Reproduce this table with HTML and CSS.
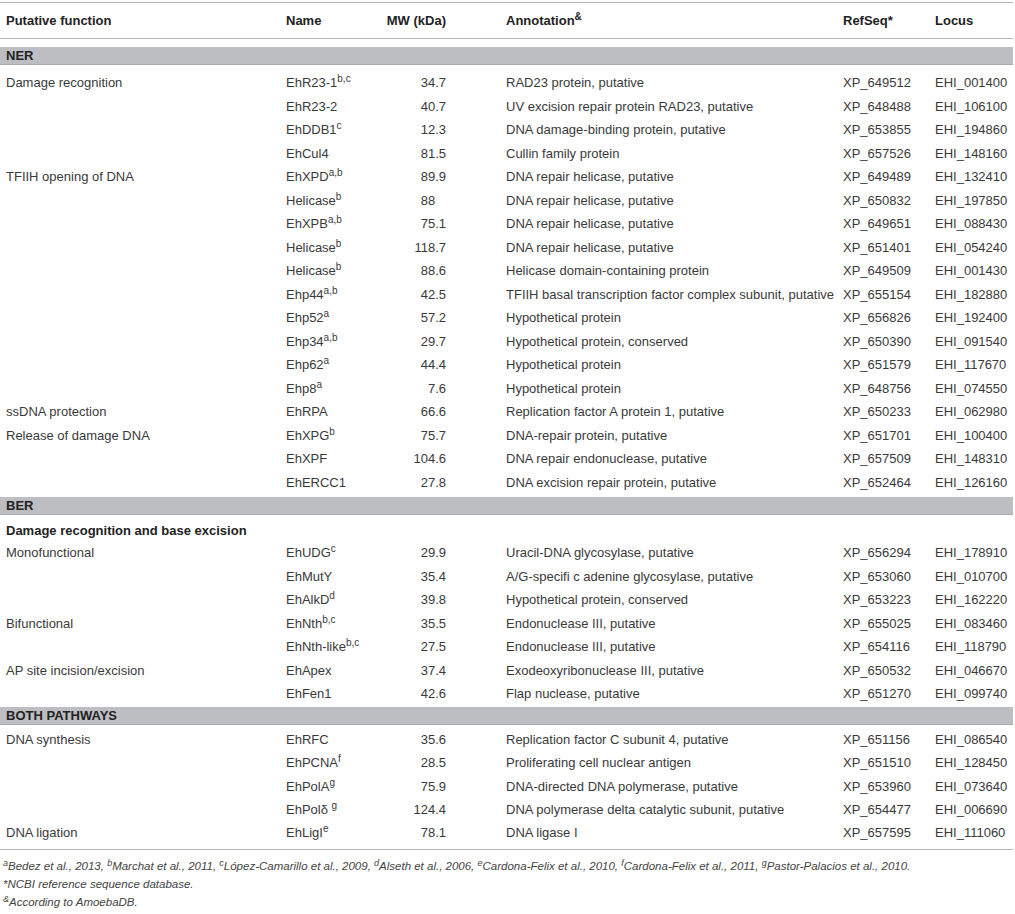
FILE: index.html
```html
<!DOCTYPE html>
<html>
<head>
<meta charset="utf-8">
<link rel="stylesheet" href="styles.css">
</head>
<body>
<table class="tbl">
  <colgroup>
    <col class="c-fn"><col class="c-name"><col class="c-mw"><col class="c-ann"><col class="c-ref"><col class="c-loc">
  </colgroup>
  <thead>
    <tr>
      <th>Putative function</th>
      <th>Name</th>
      <th class="mw">MW (kDa)</th>
      <th>Annotation<sup>&amp;</sup></th>
      <th>RefSeq*</th>
      <th>Locus</th>
    </tr>
  </thead>
  <tbody>
    <tr class="sec first"><td colspan="6"><div class="band">NER</div></td></tr>
    <tr><td>Damage recognition</td><td>EhR23-1<sup>b,c</sup></td><td class="mw">34.7</td><td>RAD23 protein, putative</td><td>XP_649512</td><td>EHI_001400</td></tr>
    <tr><td></td><td>EhR23-2</td><td class="mw">40.7</td><td>UV excision repair protein RAD23, putative</td><td>XP_648488</td><td>EHI_106100</td></tr>
    <tr><td></td><td>EhDDB1<sup>c</sup></td><td class="mw">12.3</td><td>DNA damage-binding protein, putative</td><td>XP_653855</td><td>EHI_194860</td></tr>
    <tr><td></td><td>EhCul4</td><td class="mw">81.5</td><td>Cullin family protein</td><td>XP_657526</td><td>EHI_148160</td></tr>
    <tr><td>TFIIH opening of DNA</td><td>EhXPD<sup>a,b</sup></td><td class="mw">89.9</td><td>DNA repair helicase, putative</td><td>XP_649489</td><td>EHI_132410</td></tr>
    <tr><td></td><td>Helicase<sup>b</sup></td><td class="mw"><span class="nodec">88</span></td><td>DNA repair helicase, putative</td><td>XP_650832</td><td>EHI_197850</td></tr>
    <tr><td></td><td>EhXPB<sup>a,b</sup></td><td class="mw">75.1</td><td>DNA repair helicase, putative</td><td>XP_649651</td><td>EHI_088430</td></tr>
    <tr><td></td><td>Helicase<sup>b</sup></td><td class="mw">118.7</td><td>DNA repair helicase, putative</td><td>XP_651401</td><td>EHI_054240</td></tr>
    <tr><td></td><td>Helicase<sup>b</sup></td><td class="mw">88.6</td><td>Helicase domain-containing protein</td><td>XP_649509</td><td>EHI_001430</td></tr>
    <tr><td></td><td>Ehp44<sup>a,b</sup></td><td class="mw">42.5</td><td>TFIIH basal transcription factor complex subunit, putative</td><td>XP_655154</td><td>EHI_182880</td></tr>
    <tr><td></td><td>Ehp52<sup>a</sup></td><td class="mw">57.2</td><td>Hypothetical protein</td><td>XP_656826</td><td>EHI_192400</td></tr>
    <tr><td></td><td>Ehp34<sup>a,b</sup></td><td class="mw">29.7</td><td>Hypothetical protein, conserved</td><td>XP_650390</td><td>EHI_091540</td></tr>
    <tr><td></td><td>Ehp62<sup>a</sup></td><td class="mw">44.4</td><td>Hypothetical protein</td><td>XP_651579</td><td>EHI_117670</td></tr>
    <tr><td></td><td>Ehp8<sup>a</sup></td><td class="mw">7.6</td><td>Hypothetical protein</td><td>XP_648756</td><td>EHI_074550</td></tr>
    <tr><td>ssDNA protection</td><td>EhRPA</td><td class="mw">66.6</td><td>Replication factor A protein 1, putative</td><td>XP_650233</td><td>EHI_062980</td></tr>
    <tr><td>Release of damage DNA</td><td>EhXPG<sup>b</sup></td><td class="mw">75.7</td><td>DNA-repair protein, putative</td><td>XP_651701</td><td>EHI_100400</td></tr>
    <tr><td></td><td>EhXPF</td><td class="mw">104.6</td><td>DNA repair endonuclease, putative</td><td>XP_657509</td><td>EHI_148310</td></tr>
    <tr><td></td><td>EhERCC1</td><td class="mw">27.8</td><td>DNA excision repair protein, putative</td><td>XP_652464</td><td>EHI_126160</td></tr>

    <tr class="sec"><td colspan="6"><div class="band">BER</div></td></tr>
    <tr class="sub"><td colspan="6">Damage recognition and base excision</td></tr>
    <tr><td>Monofunctional</td><td>EhUDG<sup>c</sup></td><td class="mw">29.9</td><td>Uracil-DNA glycosylase, putative</td><td>XP_656294</td><td>EHI_178910</td></tr>
    <tr><td></td><td>EhMutY</td><td class="mw">35.4</td><td>A/G-specifi c adenine glycosylase, putative</td><td>XP_653060</td><td>EHI_010700</td></tr>
    <tr><td></td><td>EhAlkD<sup>d</sup></td><td class="mw">39.8</td><td>Hypothetical protein, conserved</td><td>XP_653223</td><td>EHI_162220</td></tr>
    <tr><td>Bifunctional</td><td>EhNth<sup>b,c</sup></td><td class="mw">35.5</td><td>Endonuclease III, putative</td><td>XP_655025</td><td>EHI_083460</td></tr>
    <tr><td></td><td>EhNth-like<sup>b,c</sup></td><td class="mw">27.5</td><td>Endonuclease III, putative</td><td>XP_654116</td><td>EHI_118790</td></tr>
    <tr><td>AP site incision/excision</td><td>EhApex</td><td class="mw">37.4</td><td>Exodeoxyribonuclease III, putative</td><td>XP_650532</td><td>EHI_046670</td></tr>
    <tr><td></td><td>EhFen1</td><td class="mw">42.6</td><td>Flap nuclease, putative</td><td>XP_651270</td><td>EHI_099740</td></tr>

    <tr class="sec tight"><td colspan="6"><div class="band">BOTH PATHWAYS</div></td></tr>
    <tr><td>DNA synthesis</td><td>EhRFC</td><td class="mw">35.6</td><td>Replication factor C subunit 4, putative</td><td>XP_651156</td><td>EHI_086540</td></tr>
    <tr><td></td><td>EhPCNA<sup>f</sup></td><td class="mw">28.5</td><td>Proliferating cell nuclear antigen</td><td>XP_651510</td><td>EHI_128450</td></tr>
    <tr><td></td><td>EhPolA<sup>g</sup></td><td class="mw">75.9</td><td>DNA-directed DNA polymerase, putative</td><td>XP_653960</td><td>EHI_073640</td></tr>
    <tr><td></td><td>EhPolδ <sup>g</sup></td><td class="mw">124.4</td><td>DNA polymerase delta catalytic subunit, putative</td><td>XP_654477</td><td>EHI_006690</td></tr>
    <tr class="last"><td>DNA ligation</td><td>EhLigI<sup>e</sup></td><td class="mw">78.1</td><td>DNA ligase I</td><td>XP_657595</td><td>EHI_111060</td></tr>
  </tbody>
</table>
<div class="notes">
  <p><sup>a</sup>Bedez et al., 2013, <sup>b</sup>Marchat et al., 2011, <sup>c</sup>López-Camarillo et al., 2009, <sup>d</sup>Alseth et al., 2006, <sup>e</sup>Cardona-Felix et al., 2010, <sup>f</sup>Cardona-Felix et al., 2011, <sup>g</sup>Pastor-Palacios et al., 2010.</p>
  <p>*NCBI reference sequence database.</p>
  <p><sup>&amp;</sup>According to AmoebaDB.</p>
</div>
</body>
</html>
```
FILE: styles.css
```css
html, body {
  margin: 0;
  padding: 0;
  background: #fff;
}
body {
  font-family: "Liberation Sans", Arial, sans-serif;
  font-size: 13px;
  color: #3a3a3a;
  padding-top: 2px;
}
.tbl {
  width: 1013px;
  border-collapse: collapse;
  table-layout: fixed;
}
.c-fn { width: 280px; }
.c-name { width: 95px; }
.c-mw { width: 125px; }
.c-ann { width: 337px; }
.c-ref { width: 92px; }
.c-loc { width: 84px; }

.tbl th {
  font-weight: bold;
  color: #222;
  text-align: left;
  height: 35px;
  padding: 0 6px;
  border-top: 1.5px solid #b5b5b5;
  border-bottom: 1.5px solid #b5b5b5;
  white-space: nowrap;
}
.tbl td {
  height: 23.5px;
  padding: 0 6px;
  white-space: nowrap;
  vertical-align: middle;
}
.tbl .mw {
  text-align: right;
  padding-right: 54px;
}
.nodec {
  padding-right: 10.8px;
}
sup {
  font-size: 10px;
  line-height: 0;
  vertical-align: 5px;
}
.tbl tr.sec td {
  height: auto;
  padding: 3px 0 4px 0;
}
.tbl tr.sec.first td {
  padding-top: 8px;
  padding-bottom: 6px;
}
.tbl tr.sec.tight td {
  padding-top: 1px;
  padding-bottom: 3px;
}
.band {
  background: #bdbec1;
  border-bottom: 1px solid #a9aaad;
  height: 17px;
  line-height: 17px;
  padding-left: 6px;
  font-weight: bold;
  color: #222;
}
.tbl tr.sub td {
  font-weight: bold;
  color: #222;
  height: 22px;
}
.tbl tr.last td {
  border-bottom: 1.5px solid #b5b5b5;
  height: 24px;
  vertical-align: top;
  padding-top: 3px;
}
.notes {
  padding: 7px 3px 0 3px;
  font-style: italic;
  font-size: 11.5px;
  color: #444;
}
.notes p {
  margin: 0;
  line-height: 18px;
}
.notes sup {
  font-size: 9px;
  vertical-align: 4px;
}
```
